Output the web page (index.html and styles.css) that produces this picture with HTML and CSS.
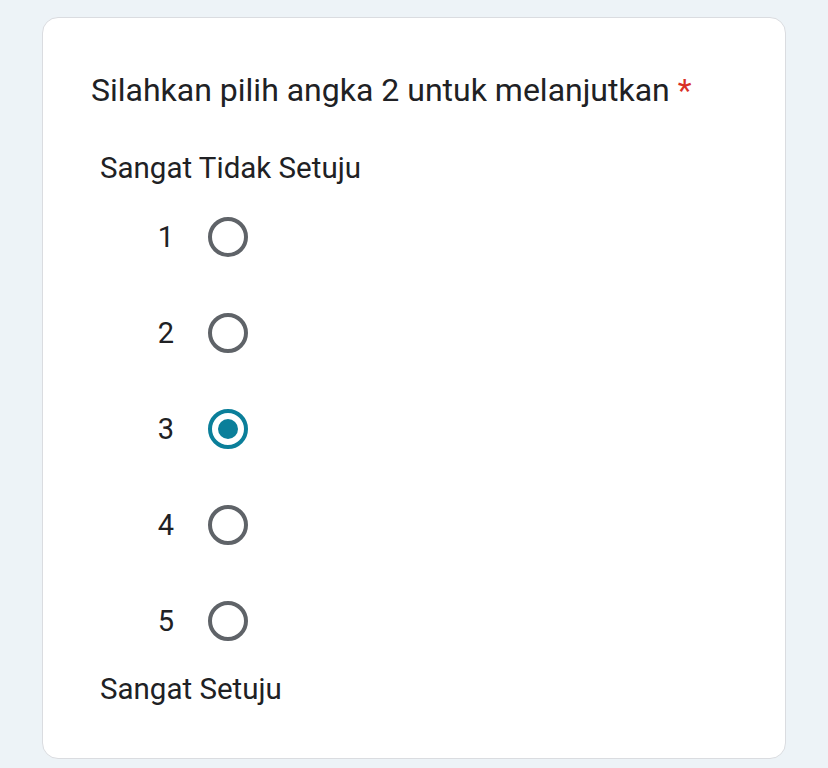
FILE: index.html
```html
<!DOCTYPE html>
<html lang="id">
<head>
<meta charset="utf-8">
<link rel="stylesheet" href="styles.css">
</head>
<body>
<div class="card">
  <div class="title">Silahkan pilih angka 2 untuk melanjutkan <span class="req">*</span></div>
  <div class="label top">Sangat Tidak Setuju</div>
  <div class="options">
    <div class="row"><span class="num">1</span><span class="radio"></span></div>
    <div class="row"><span class="num">2</span><span class="radio"></span></div>
    <div class="row"><span class="num">3</span><span class="radio checked"></span></div>
    <div class="row"><span class="num">4</span><span class="radio"></span></div>
    <div class="row"><span class="num">5</span><span class="radio"></span></div>
  </div>
  <div class="label bottom">Sangat Setuju</div>
</div>
</body>
</html>
```
FILE: styles.css
```css
html, body {
  margin: 0;
  padding: 0;
}
body {
  background: #edf3f7;
  font-family: Roboto, "Liberation Sans", sans-serif;
  color: #202124;
  width: 828px;
  height: 768px;
  overflow: hidden;
}
.card {
  margin: 17px 0 0 42px;
  width: 742px;
  height: 740px;
  box-sizing: content-box;
  background: #fff;
  border: 1px solid #dadce0;
  border-radius: 16px;
  padding: 0;
  display: flex;
  flex-direction: column;
}
.title {
  font-size: 32px;
  line-height: 48px;
  margin: 48px 0 0 48px;
}
.req {
  color: #d93025;
}
.label {
  font-size: 29.5px;
  line-height: 40px;
  margin-left: 57px;
}
.label.top {
  margin-top: 34px;
}
.options {
  display: flex;
  flex-direction: column;
  margin-top: 1px;
}
.row {
  height: 96px;
  display: flex;
  align-items: center;
  margin-left: 109px;
  gap: 28px;
}
.num {
  width: 28px;
  text-align: center;
  font-size: 29px;
}
.radio {
  width: 40px;
  height: 40px;
  box-sizing: border-box;
  border: 4px solid #5f6368;
  border-radius: 50%;
  display: flex;
  align-items: center;
  justify-content: center;
}
.radio.checked {
  border-color: #0b7f9a;
}
.radio.checked::after {
  content: "";
  width: 20px;
  height: 20px;
  border-radius: 50%;
  background: #0b7f9a;
}
```
